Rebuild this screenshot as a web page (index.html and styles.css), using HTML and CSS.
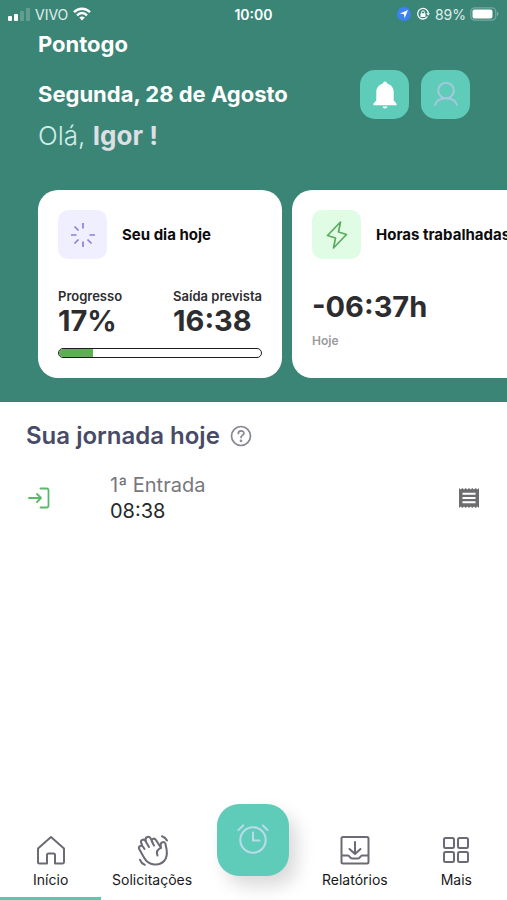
FILE: index.html
```html
<!DOCTYPE html>
<html lang="pt-BR">
<head>
<meta charset="utf-8">
<meta name="viewport" content="width=device-width, initial-scale=1">
<title>Pontogo</title>
<link rel="stylesheet" href="styles.css">
</head>
<body>
<div class="app">
  <header class="hero">
    <div class="status">
      <div class="status-side">
        <svg class="signal" viewBox="0 0 22 13" aria-hidden="true"><rect x="0" y="8" width="4" height="5" rx="1" fill="#fff"/><rect x="6" y="6" width="4" height="7" rx="1" fill="#fff"/><rect x="12" y="3" width="4" height="10" rx="1" fill="#fff" opacity=".2"/><rect x="18" y="0" width="4" height="13" rx="1" fill="#fff" opacity=".2"/></svg>
        <span class="carrier">VIVO</span>
        <svg class="wifi" viewBox="0 0 18 14" aria-hidden="true" fill="none" stroke="#fff" stroke-width="2.4"><path d="M1 5.200C5.500.500 12.500.500 17 5.200M4 8.300C7 5.200 11 5.200 14 8.300"/><path d="M9 13.500 6.200 10.600C7.800 9.100 10.200 9.100 11.800 10.600Z" fill="#fff" stroke="none"/></svg>
      </div>
      <time class="clock">10:00</time>
      <div class="status-side status-right">
        <svg class="location" viewBox="0 0 14 14" aria-hidden="true"><circle cx="7" cy="7" r="7" fill="#3b82f2"/><path d="M11 3 7.600 11.200 6.900 7.300 3 6.500Z" fill="#fff"/></svg>
        <svg class="rotation" viewBox="0 0 14 14" aria-hidden="true" fill="none" stroke="#fff" stroke-width="1.300"><path d="M11.500 9.500A5.300 5.300 0 1 1 12.300 6.500"/><path d="M10.300 6.200h3.700l-1.800 2.500z" fill="#fff" stroke="none"/><rect x="4.500" y="6.300" width="5" height="3.700" rx=".5" fill="#fff" stroke="none"/><path d="M5.500 6.500V5.400a1.500 1.500 0 0 1 3 0v1.100" stroke-width="1"/></svg>
        <span class="power"><span class="charge">89%</span>
        <svg class="battery" viewBox="0 0 29 14" aria-hidden="true"><rect x=".8" y=".8" width="25" height="12.400" rx="4" fill="none" stroke="#fff" stroke-opacity=".3" stroke-width="1.200"/><rect x="2.500" y="2.500" width="20" height="9" rx="2" fill="#fff"/><path d="M27 4.800q3 2.200 0 4.400z" fill="#fff" opacity=".35"/></svg></span>
      </div>
    </div>
    <p class="brand">Pontogo</p>
    <div class="greeting">
      <div>
        <p class="date">Segunda, 28 de Agosto</p>
        <p class="hello">Olá, <strong>Igor !</strong></p>
      </div>
      <div class="actions">
        <button class="action" type="button" aria-label="Notificações"><svg viewBox="0 0 26 30" aria-hidden="true" fill="#fff"><path d="M11 3.500a2 2 0 0 1 4 0c4 1 6.700 4.200 6.700 8.500v8.500l2.800 3v1.700H1.500v-1.700l2.800-3V12C4.300 7.700 7 4.500 11 3.500ZM10.500 26.500h5c-.3 1.200-1.200 2-2.500 2s-2.200-.8-2.500-2Z"/></svg></button>
        <button class="action" type="button" aria-label="Perfil"><svg viewBox="0 0 26 30" aria-hidden="true" fill="none" stroke="#a4c8dc" stroke-width="2" stroke-linecap="round"><circle cx="13" cy="10.500" r="7.800"/><path d="M2 25c1.500-4.800 5-6.700 11-6.700S22.500 20.200 24 25"/></svg></button>
      </div>
    </div>
    <div class="cards">
      <article class="card">
        <div class="card-head">
          <span class="tile lilac"><svg viewBox="0 0 24 24" aria-hidden="true" fill="none" stroke="#8b7fd6" stroke-width="1.700"><path d="M12 0v5.500M12 18.500V24M0 12h5.500M18.500 12H24M3.500 3.500l4 4M16.500 16.500l4 4M3.500 20.500l4-4"/></svg></span>
          <h2>Seu dia hoje</h2>
        </div>
        <div class="stats">
          <div><p class="stat-label">Progresso</p><p class="stat">17%</p></div>
          <div><p class="stat-label">Saída prevista</p><p class="stat">16:38</p></div>
        </div>
        <div class="track" role="progressbar" aria-label="Progresso" aria-valuenow="17" aria-valuemin="0" aria-valuemax="100"><div class="fill" style="width:17%"></div></div>
      </article>
      <article class="card">
        <div class="card-head">
          <span class="tile mint"><svg viewBox="0 0 24 28" aria-hidden="true" fill="none" stroke="#5aaa5c" stroke-width="1.700" stroke-linejoin="round"><path d="M15.500 1 2.500 14.500 10.500 17 8.500 27 21.500 13.500 13.500 11Z"/></svg></span>
          <h2>Horas trabalhadas</h2>
        </div>
        <p class="stat balance">-06:37h</p>
        <p class="period">Hoje</p>
      </article>
    </div>
  </header>
  <main class="journey">
    <div class="journey-head">
      <h1>Sua jornada hoje</h1>
      <button class="help" type="button" aria-label="Ajuda"><svg viewBox="0 0 22 22" aria-hidden="true" fill="none" stroke="#858791" stroke-width="1.700" stroke-linecap="round"><circle cx="11" cy="11" r="9.500"/><path d="M8.300 8.500c0-3.700 5.700-3.500 5.600-.2 0 2-2.900 2.200-2.900 4.200"/><circle cx="11" cy="15.800" r=".5" fill="#858791"/></svg></button>
    </div>
    <div class="entry">
      <svg class="enter" viewBox="0 0 24 24" aria-hidden="true" fill="none" stroke="#5cb868" stroke-width="1.800" stroke-linecap="round" stroke-linejoin="round"><path d="M3 12h12M11 8l4 4-4 4M14.500 2.500h6a2 2 0 0 1 2 2v15a2 2 0 0 1-2 2h-6"/></svg>
      <div class="entry-text"><p class="entry-name">1ª Entrada</p><time class="entry-time">08:38</time></div>
      <button class="receipt" type="button" aria-label="Comprovante"><svg viewBox="0 0 20 20" aria-hidden="true"><path d="M0 0 1.700 1.500 3.300 0 5 1.500 6.700 0 8.300 1.500 10 0 11.700 1.500 13.300 0 15 1.500 16.700 0 18.300 1.500 20 0V20l-1.700-1.500L16.700 20 15 18.500 13.300 20l-1.600-1.500L10 20l-1.700-1.500L6.700 20 5 18.500 3.300 20l-1.600-1.500L0 20Z" fill="#6d6d70"/><path d="M3.500 5.700h13M3.500 10h13M3.500 14.300h13" stroke="#fff" stroke-width="2"/></svg></button>
    </div>
  </main>
  <nav class="tabs" aria-label="Principal">
    <a class="tab active" href="#inicio"><svg viewBox="0 0 30 30" aria-hidden="true"><path d="M2 13.500 15 2l13 11.500V27a1.500 1.500 0 0 1-1.500 1.500H19V20a1.500 1.500 0 0 0-1.500-1.500h-5A1.500 1.500 0 0 0 11 20v8.500H3.500A1.500 1.500 0 0 1 2 27Z"/></svg>Início</a>
    <a class="tab" href="#solicitacoes"><svg viewBox="0 0 30 30" aria-hidden="true"><path d="M7.500 14 6 11.800C4.300 9.500 1 11.500 2.200 14L7 22.500C11.500 31 22.500 31.500 27.500 25.500 31 21 30 17 29.400 13.500L28.500 9C27.600 6 23.500 6.800 23.700 9.800L23.900 12.800 18.800 4.800C17.200 2.500 13.800 4.200 15 6.800L17 10.500M5.300 10.500 4.200 8C3 5.300 6.800 3.300 8.300 5.800L12 12M9 6.500 8.700 5C8 2 12 .6 13.500 3.200L15.500 7"/><path d="M23.900 12.800C20 14.500 19 17 20.500 20.500M25 1.300c2.300.7 4 2.200 5 4.200M3 24.800c.8 2.200 2.500 4 4.800 5"/></svg>Solicitações</a>
    <div class="punch-slot"><button class="punch" type="button" aria-label="Registrar ponto"><svg viewBox="0 0 34 34" aria-hidden="true" fill="none" stroke="#b9dcea" stroke-width="2.200" stroke-linecap="round" stroke-linejoin="round"><circle cx="17" cy="17" r="13.500"/><path d="M17 9v8.500h7M1.500 6.500 6.500 1.500M32.500 6.500 27.500 1.500"/></svg></button></div>
    <a class="tab" href="#relatorios"><svg viewBox="0 0 30 30" aria-hidden="true"><rect x="1.500" y="2" width="27" height="26.500" rx="1.500"/><path d="M15 7v12M9.500 14l5.500 5 5.500-5M2 20.500h6c1.500 0 2 3 4 3h6c2 0 2.500-3 4-3h6"/></svg>Relatórios</a>
    <a class="tab" href="#mais"><svg viewBox="0 0 30 30" aria-hidden="true"><rect x="3" y="3" width="10" height="10" rx="1.500"/><rect x="17" y="3" width="10" height="10" rx="1.500"/><rect x="3" y="17" width="10" height="10" rx="1.500"/><rect x="17" y="17" width="10" height="10" rx="1.500"/></svg>Mais</a>
  </nav>
</div>
</body>
</html>
```
FILE: styles.css
```css
* { box-sizing: border-box; }
body { margin: 0; background: #fff; color: #27272a; font-family: Inter, "Liberation Sans", sans-serif; }
p, h1, h2 { margin: 0; }
button { padding: 0; border: 0; background: none; font: inherit; display: grid; place-items: center; }
svg { display: block; flex: none; overflow: visible; }
.app { min-height: 100vh; display: flex; flex-direction: column; overflow: hidden; }

.hero { background: #3b8577; color: #fff; padding-bottom: 24px; }
.status { display: grid; grid-template-columns: 1fr auto 1fr; align-items: center; height: 28px; padding: 0 8px; font-size: 14px; }
.status-side { display: flex; align-items: center; gap: 5px; color: #e0eeeb; }
.status-right { justify-content: flex-end; }
.power { display: flex; align-items: center; gap: 4px; }
.signal { width: 22px; height: 13px; }
.wifi { width: 18px; height: 14px; }
.clock { font-weight: 600; }
.location, .rotation { width: 14px; height: 14px; }
.battery { width: 29px; height: 14px; }

.brand { padding: 0 38px; font-size: 22px; font-weight: 700; line-height: 32px; }
.greeting { display: flex; justify-content: space-between; align-items: flex-start; padding: 10px 37px 0 38px; }
.date { padding-top: 8px; font-size: 22px; font-weight: 700; line-height: 32px; }
.hello { margin-top: 6px; font-size: 26px; font-weight: 300; line-height: 40px; color: #d1eee8; }
.hello strong { font-weight: 700; color: #dddfe3; }
.actions { display: flex; gap: 12px; }
.action { width: 49px; height: 49px; border-radius: 15px; background: #5fcbb9; }
.action svg { width: 26px; height: 30px; }

.cards { display: flex; gap: 10px; padding: 34px 0 0 38px; overflow: hidden; }
.card { flex: 0 0 244px; height: 188px; padding: 20px; border-radius: 20px; background: #fff; color: #2d2d30; }
.card-head { display: flex; align-items: center; gap: 15px; }
.card-head h2 { font-size: 15px; font-weight: 700; color: #0c0c0e; white-space: nowrap; }
.tile { display: grid; place-items: center; flex: none; width: 49px; height: 49px; border-radius: 10px; }
.tile svg { width: 24px; height: 28px; }
.lilac { background: #f0efff; }
.mint { background: #e1fce5; }
.stats { display: flex; justify-content: space-between; margin-top: 29px; }
.stat-label { font-size: 13px; font-weight: 600; line-height: 16px; }
.stat { font-size: 29px; font-weight: 700; line-height: 34px; }
.balance { margin-top: 31px; }
.period { margin-top: 9px; font-size: 12px; font-weight: 600; line-height: 16px; color: #9a9a9d; }
.track { height: 10px; margin-top: 10px; border: 1px solid #1d1d1f; border-radius: 5px; overflow: hidden; }
.fill { height: 100%; background: #60ad58; }

.journey { flex: 1; padding: 15px 26px; }
.journey-head { display: flex; align-items: center; gap: 10px; }
.journey h1 { font-size: 24px; font-weight: 600; line-height: 38px; color: #484b66; }
.help svg { width: 22px; height: 22px; }
.entry { display: flex; align-items: center; margin-top: 17px; }
.enter { width: 24px; height: 24px; }
.entry-text { flex: 1; margin-left: 60px; font-size: 20px; line-height: 26px; }
.entry-name { color: #77777d; }
.entry-time { display: block; }
.receipt { width: 24px; height: 24px; }
.receipt svg { width: 20px; height: 20px; }

.tabs { display: grid; grid-template-columns: repeat(5, 1fr); height: 96px; }
.tab { display: flex; flex-direction: column; align-items: center; gap: 6px; padding-top: 31px; border-bottom: 3px solid transparent; font-size: 14px; line-height: 18px; color: #18181b; text-decoration: none; }
.tab.active { border-color: #58c8b2; }
.tab svg { width: 30px; height: 30px; fill: none; stroke: #6a6b75; stroke-width: 2; stroke-linecap: round; stroke-linejoin: round; }
.punch-slot { display: flex; justify-content: center; }
.punch { width: 72px; height: 72px; border-radius: 22px; background: #5fcbb9; box-shadow: 8px 10px 18px rgba(0, 0, 0, .15); }
.punch svg { width: 32px; height: 32px; }
```
